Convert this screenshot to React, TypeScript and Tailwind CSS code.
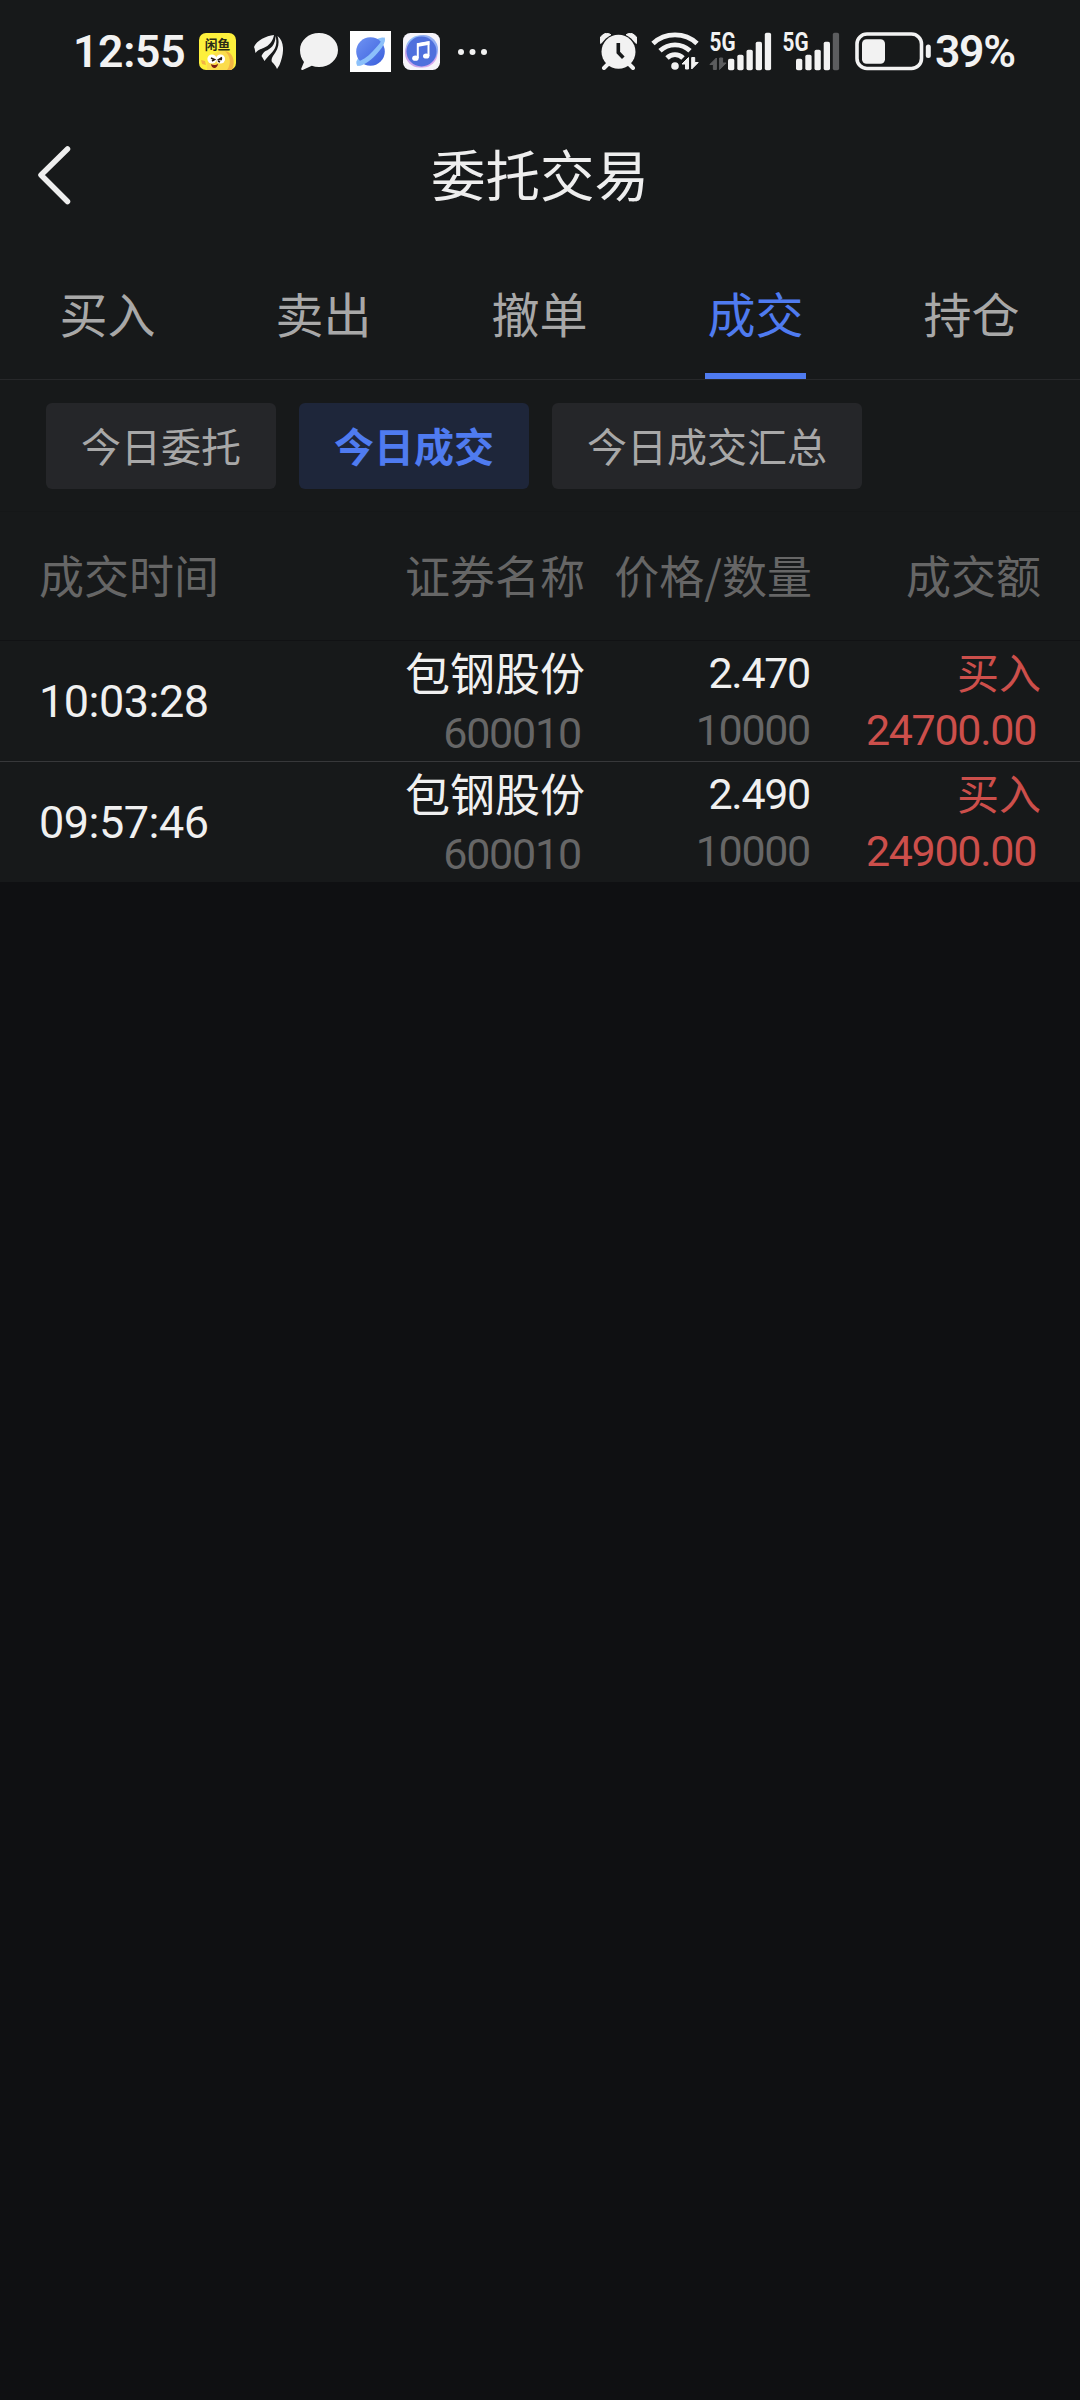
import React from "react";

const CJK = "font-['Noto_Sans_CJK_SC',sans-serif]";
const NUM = "font-[Roboto,'Noto_Sans_CJK_SC',sans-serif]";

const tabs = ["买入", "卖出", "撤单", "成交", "持仓"];
const chips = ["今日委托", "今日成交", "今日成交汇总"];
const rows = [
  { time: "10:03:28", name: "包钢股份", code: "600010", price: "2.470", qty: "10000", side: "买入", amount: "24700.00" },
  { time: "09:57:46", name: "包钢股份", code: "600010", price: "2.490", qty: "10000", side: "买入", amount: "24900.00" },
];

function FishAppIcon() {
  return (
    <svg className="ml-[14px] h-[37px] w-[37px] shrink-0" viewBox="0 0 37 37">
      <defs>
        <clipPath id="fishClip"><rect width="37" height="37" rx="7" /></clipPath>
      </defs>
      <g clipPath="url(#fishClip)">
        <rect width="37" height="37" fill="#fdf03c" />
        <path d="M8 37C7 24 15 18 25 18c8 0 11 9 9 19z" fill="#fbdc4c" />
        <path d="M26 18c8 1 11 11 7 19h-5c5-7 3-14-2-19z" fill="#f3b544" />
        <path d="M2 27l4 1 1 4-4-1z" fill="#f3b544" />
        <circle cx="13" cy="26" r="4.6" fill="#fff" />
        <circle cx="21.500" cy="26" r="4.6" fill="#fff" />
        <path d="M12 25l3.500 1.500-2.500 1.500M23 24.500l-3 2h3M19 28l2 1" fill="none" stroke="#2b1a10" strokeWidth="1.600" />
        <path d="M12 31c2 1.500 5 1.500 7-.2-.5 5.500-6.500 5.500-7 .2z" fill="#7c1f14" />
        <text x="18.500" y="15.800" textAnchor="middle" fontSize="12.800" fontWeight="700" fill="#2a2a18" className={CJK}>闲鱼</text>
      </g>
    </svg>
  );
}

function WingIcon() {
  return (
    <svg className="ml-[18px] h-[34px] w-[29px] shrink-0" viewBox="0 0 29 34" fill="#f2f2f2">
      <path d="M20 0C12 1 3 5 0 12c1 2 1 4 1.500 6 3-4 6-4 8-5C15 11 19 6 20 0z" />
      <path d="M21.500 1c0 9-5 13-10 15-2 1-3 3-4 5 1 2 2 3 3 5 2-3 4-5 6-7C22 14 23.500 8 21.500 1z" />
      <path d="M23.500 1c7 5 7 17 2 29l-2.500 4c-1-3-3-5-5-7-1-2 0-4 1-6 5-6 7-13 4.500-20z" />
    </svg>
  );
}

function BubbleIcon() {
  return (
    <svg className="ml-[17px] h-[37px] w-[38px] shrink-0" viewBox="0 0 38 37" fill="#f2f2f2">
      <path d="M19 0c10.500 0 19 7.500 19 17s-8.500 17-19 17c-2.600 0-5-.4-7.200-1.200L2.600 37c-1 .3-1.700-.5-1.300-1.400L4 29C1.500 26 0 21.800 0 17 0 7.500 8.500 0 19 0z" />
    </svg>
  );
}

function PlanetIcon() {
  return (
    <svg className="ml-[12px] h-[41px] w-[41px] shrink-0" viewBox="0 0 41 41">
      <defs>
        <linearGradient id="planet" x1="0" y1="0" x2="1" y2="1">
          <stop offset="0" stopColor="#6f93f3" /><stop offset="1" stopColor="#3a5fdc" />
        </linearGradient>
      </defs>
      <rect width="41" height="41" fill="#fff" />
      <ellipse cx="20.500" cy="20.500" rx="19" ry="5.800" transform="rotate(-45 20.500 20.500)" fill="#8fc4fb" />
      <circle cx="20.500" cy="20.500" r="14.300" fill="url(#planet)" />
      <path d="M6.500 29.500C8 32 16 27.500 22.500 20.500 29 14 33 8.500 31.500 7l3.200-.6c1.500 4.500-3 11.500-9.400 18C19 31 11.500 35.500 7 34.800z" fill="#8cc0fa" />
    </svg>
  );
}

function MusicIcon() {
  return (
    <svg className="ml-[12px] h-[37px] w-[37px] shrink-0" viewBox="0 0 37 37">
      <rect width="37" height="37" rx="7.500" fill="#f6f4fa" />
      <circle cx="17" cy="17" r="14.500" fill="#8fbdf5" />
      <circle cx="20" cy="20" r="14.500" fill="#d9a9ee" />
      <circle cx="20.500" cy="16.500" r="14.500" fill="#92aef3" />
      <circle cx="16.500" cy="20" r="14.500" fill="#c9a4ec" />
      <circle cx="18.500" cy="18.500" r="15" fill="#4f70dd" />
      <path d="M14.800 25V11.200l10.700-2V23" fill="none" stroke="#fff" strokeWidth="2" />
      <path d="M14 10.500l12.400-2.300v3.600L14 14z" fill="#fff" />
      <ellipse cx="12.400" cy="25.200" rx="3.200" ry="2.600" fill="#fff" />
      <ellipse cx="23.200" cy="23" rx="3.200" ry="2.600" fill="#fff" />
    </svg>
  );
}

function DotsIcon() {
  return (
    <svg className="ml-[18px] h-[6px] w-[29px] shrink-0" viewBox="0 0 29 6" fill="#f2f2f2">
      <circle cx="3" cy="3" r="3" /><circle cx="14.500" cy="3" r="3" /><circle cx="26" cy="3" r="3" />
    </svg>
  );
}

function AlarmIcon() {
  return (
    <svg className="ml-[113px] h-[37px] w-[37px] shrink-0" viewBox="0 0 37 37">
      <path d="M.6 10.500A7 7 0 0 1 11 1.800zM36.400 10.500A7 7 0 0 0 26 1.800z" fill="#f2f2f2" stroke="#f2f2f2" strokeWidth="1" strokeLinejoin="round" />
      <circle cx="18.500" cy="18.800" r="18.300" fill="#17191a" />
      <path d="M8 31l-4 4M29 31l4 4" stroke="#f2f2f2" strokeWidth="4" strokeLinecap="round" />
      <circle cx="18.500" cy="18.800" r="17" fill="#f2f2f2" />
      <path d="M18.300 10v9.500l5 5.300" fill="none" stroke="#17191a" strokeWidth="3.600" />
    </svg>
  );
}

function DataArrows({ x, y, fill }: { x: number; y: number; fill: string }) {
  return (
    <g transform={`translate(${x} ${y})`} fill={fill} stroke={fill} strokeWidth="1" strokeLinejoin="round">
      <path d="M7 0v11.500H4V6.500H.5z" />
      <path d="M10.200 11.500V0h3v5h3.500z" />
    </g>
  );
}

function WifiIcon() {
  return (
    <svg className="ml-[14px] h-[39px] w-[49px] shrink-0" viewBox="651 31 49 39">
      <g fill="none" stroke="#f2f2f2" strokeWidth="4.800">
        <path d="M653 42.500c12-11.500 32-11.500 44 0" />
        <path d="M660 49.800c8.500-8 21.500-8 30 0" />
        <path d="M667 57c4.500-4.500 11.500-4.500 16 0" />
      </g>
      <circle cx="675" cy="65" r="3.800" fill="#f2f2f2" />
      <DataArrows x={681.5} y={56.500} fill="#f2f2f2" />
    </svg>
  );
}

const bars = [
  { x: 19, top: 26 },
  { x: 28.300, top: 22 },
  { x: 37.500, top: 17 },
  { x: 46.700, top: 9 },
  { x: 55.800, top: 0 },
];

function Signal({ first }: { first?: boolean }) {
  return (
    <svg className={first ? "ml-[9px] h-[39px] w-[63px] shrink-0 overflow-visible" : "ml-[5px] h-[39px] w-[63px] shrink-0 overflow-visible"} viewBox="0 0 63 39">
      <text x={first ? .5 : 5.500} y="19.300" fontSize="25.500" fontWeight="700" fill="#f2f2f2" textLength="26" lengthAdjust="spacingAndGlyphs" className={NUM}>5G</text>
      {first && <DataArrows x={.4} y={26} fill="#5c5d5f" />}
      {bars.map((b, i) => (
        <rect key={i} x={b.x} y={b.top + .8} width="6.300" height={37.400 - b.top} rx="1.800" fill={!first && i === 4 ? "#5c5d5f" : "#f2f2f2"} />
      ))}
    </svg>
  );
}

function BatteryIcon() {
  return (
    <svg className="ml-[15px] h-[39px] w-[76px] shrink-0" viewBox="854 31 76 39">
      <rect x="856" y="33" width="64.500" height="34.500" rx="10" fill="none" stroke="#f2f2f2" strokeWidth="3.600" />
      <rect x="861" y="38.300" width="23" height="24.500" rx="4.500" fill="#f2f2f2" />
      <rect x="924.800" y="43.500" width="5" height="13.500" rx="2.500" fill="#f2f2f2" />
    </svg>
  );
}

function StatusBar() {
  return (
    <div className={`flex h-[103px] items-center text-[#f2f2f2] ${NUM}`}>
      <span className="ml-[73px] w-[112px] whitespace-nowrap text-[44.500px] font-semibold leading-[44px] tracking-[-0.3px]">12:55</span>
      <FishAppIcon />
      <WingIcon />
      <BubbleIcon />
      <PlanetIcon />
      <MusicIcon />
      <DotsIcon />
      <AlarmIcon />
      <WifiIcon />
      <Signal first />
      <Signal />
      <BatteryIcon />
      <span className="ml-[4px] whitespace-nowrap text-[44.500px] font-semibold leading-[44px] tracking-[-1.300px]">39%</span>
    </div>
  );
}

export default function App() {
  return (
    <div className={`h-[2400px] w-[1080px] overflow-hidden bg-[#0f1012] ${CJK}`}>
      <div className="bg-[#17191a]">
        <StatusBar />
        <header className="grid h-[145px] grid-cols-[216px_1fr_216px] items-center">
          <svg className="ml-[36px] h-[60px] w-[36px]" viewBox="0 0 36 60" fill="none" stroke="#eeeeee" strokeWidth="5.500" strokeLinecap="round" strokeLinejoin="round">
            <path d="M31.500 3L5 29l26.500 26.500" />
          </svg>
          <h1 className="mb-[5px] text-center text-[54.500px] font-normal leading-[60px] text-[#eeeeee]">委托交易</h1>
        </header>
        <nav className="grid h-[132px] grid-cols-5 border-b border-[#27282a]">
          {tabs.map((t) => (
            <div key={t} className={t === "成交" ? "flex flex-col items-center justify-between pr-px text-[#4f7bf0]" : "flex flex-col items-center pr-px text-[#a8a8a8]"}>
              <span className="mt-[34px] text-[48px] leading-[60px]">{t}</span>
              {t === "成交" && <span className="h-[6px] w-[101px] bg-[#4f7bf0]" />}
            </div>
          ))}
        </nav>
        <div className="flex h-[132px] gap-[23px] border-b border-[#151718] pl-[46px] pt-[23px]">
          {chips.map((c) => (
            <button key={c} className={c === "今日成交" ? "h-[86px] rounded-md bg-[#1e263a] px-[35px] pb-[2px] text-[40px] font-bold leading-[84px] text-[#4f7bf0]" : "h-[86px] rounded-md bg-[#252629] px-[35px] pb-[2px] text-[40px] leading-[84px] text-[#a8a8a8]"}>
              {c}
            </button>
          ))}
        </div>
        <div className="grid h-[129px] grid-cols-[360px_225px_228px_228px] border-b border-[#111214] text-right text-[45px] leading-[125px] text-[#666666]">
          <span className="pl-[39px] text-left">成交时间</span>
          <span>证券名称</span>
          <span className="whitespace-nowrap pr-px">价格/数量</span>
          <span>成交额</span>
        </div>
        {rows.map((r, i) => (
          <div key={r.time} className={i === 0 ? "grid h-[121px] grid-cols-[360px_225px_228px_228px] border-b border-[#37383a] text-right" : "grid h-[120px] grid-cols-[360px_225px_228px_228px] text-right"}>
            <span className={`pl-[39px] text-left text-[45px] leading-[121px] tracking-[-0.5px] text-[#f0f0f0] ${NUM}`}>{r.time}</span>
            <div className="flex flex-col">
              <span className="mt-px text-[45px] leading-[60px] text-[#f0f0f0]">{r.name}</span>
              <span className={`mt-[2px] pr-[4px] text-[43px] leading-[58px] tracking-[-1.200px] text-[#666666] ${NUM}`}>{r.code}</span>
            </div>
            <div className={`flex flex-col pr-[3px] text-[43px] tracking-[-1.300px] ${NUM}`}>
              <span className="mt-[3px] leading-[58px] text-[#f0f0f0]">{r.price}</span>
              <span className="leading-[57px] text-[#666666]">{r.qty}</span>
            </div>
            <div className="flex flex-col text-[#cc4f4b]">
              <span className="mt-px text-[42px] leading-[58px]">{r.side}</span>
              <span className={`mt-[2px] pr-[5px] text-[43px] leading-[57px] tracking-[-1.300px] ${NUM}`}>{r.amount}</span>
            </div>
          </div>
        ))}
      </div>
    </div>
  );
}
